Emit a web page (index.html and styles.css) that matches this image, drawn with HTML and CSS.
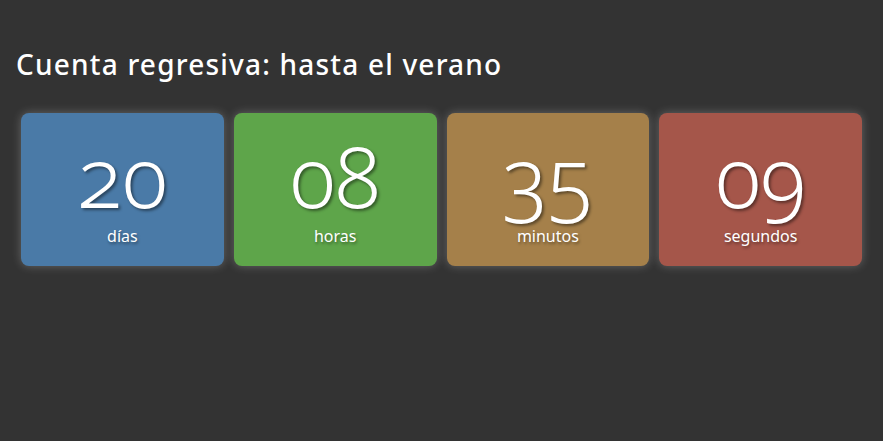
FILE: index.html
```html
<!DOCTYPE html>
<html lang="es">
<head>
<meta charset="utf-8">
<title>Cuenta regresiva</title>
<link rel="stylesheet" href="styles.css">
</head>
<body>
<main class="page">
  <h1 class="title">Cuenta regresiva: hasta el verano</h1>
  <div class="timer">
    <div class="card card-blue"><div class="num">20</div><div class="label">días</div></div>
    <div class="card card-green"><div class="num">08</div><div class="label">horas</div></div>
    <div class="card card-gold"><div class="num">35</div><div class="label">minutos</div></div>
    <div class="card card-red"><div class="num">09</div><div class="label">segundos</div></div>
  </div>
</main>
</body>
</html>
```
FILE: styles.css
```css
html, body {
  margin: 0;
  background: #333333;
}
body {
  font-family: "Noto Sans", "Open Sans", sans-serif;
  color: #ffffff;
  height: 441px;
  overflow: hidden;
}
.page {
  padding: 47px 16px 0;
}
.title {
  margin: 0 0 32px;
  font-size: 28px;
  line-height: 34px;
  font-weight: 500;
  letter-spacing: 1.2px;
  color: #ffffff;
}
.timer {
  display: flex;
  gap: 10px;
  padding: 0 5px;
}
.card {
  flex: 1;
  height: 153px;
  box-sizing: border-box;
  padding-top: 24px;
  border-radius: 8px;
  text-align: center;
  box-shadow: 0 0 10px rgba(255, 255, 255, 0.25);
}
.card-blue { background: #4a7aa7; }
.card-green { background: #5ea54a; }
.card-gold { background: #a5804a; }
.card-red { background: #a5564a; }
.num {
  font-size: 84px;
  line-height: 78px;
  font-weight: 300;
  font-variant-numeric: oldstyle-nums;
  text-shadow: 2px 2px 3px rgba(0, 0, 0, 0.45);
}
.label {
  margin-top: 12px;
  font-size: 16px;
  line-height: 18px;
  text-shadow: 1px 2px 3px rgba(0, 0, 0, 0.4);
}
```
